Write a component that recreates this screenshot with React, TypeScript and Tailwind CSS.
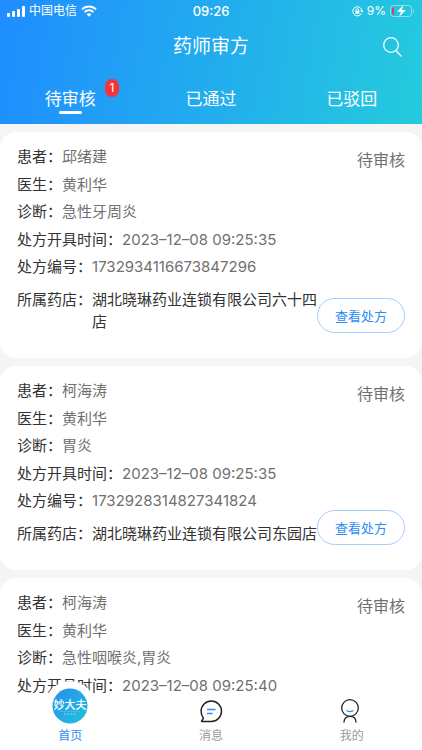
import { useState } from "react";

type Prescription = {
  patient: string;
  doctor: string;
  diagnosis: string;
  issuedAt: string;
  code: string;
  pharmacy: string;
};

const prescriptions: Prescription[] = [
  {
    patient: "邱绪建",
    doctor: "黄利华",
    diagnosis: "急性牙周炎",
    issuedAt: "2023–12–08 09:25:35",
    code: "1732934116673847296",
    pharmacy: "湖北晓琳药业连锁有限公司六十四店",
  },
  {
    patient: "柯海涛",
    doctor: "黄利华",
    diagnosis: "胃炎",
    issuedAt: "2023–12–08 09:25:35",
    code: "1732928314827341824",
    pharmacy: "湖北晓琳药业连锁有限公司东园店",
  },
  {
    patient: "柯海涛",
    doctor: "黄利华",
    diagnosis: "急性咽喉炎,胃炎",
    issuedAt: "2023–12–08 09:25:40",
    code: "1732928314827341825",
    pharmacy: "湖北晓琳药业连锁有限公司东园店",
  },
];

const tabs = [
  { label: "待审核", count: 1 },
  { label: "已通过", count: 0 },
  { label: "已驳回", count: 0 },
];

function StatusBar() {
  return (
    <div className="grid h-[22px] grid-cols-3 items-center px-[7px] text-[12px] leading-[22px]">
      <div className="flex items-center gap-1">
        <svg width="18" height="11" viewBox="0 0 18 11" fill="currentColor" aria-hidden="true">
          <rect x="0" y="7" width="3" height="4" rx="1" />
          <rect x="5" y="5" width="3" height="6" rx="1" />
          <rect x="10" y="3" width="3" height="8" rx="1" />
          <rect x="15" y="0" width="3" height="11" rx="1" />
        </svg>
        <span>中国电信</span>
        <svg width="16" height="12" viewBox="0 0 16 12" fill="none" stroke="currentColor" strokeWidth="2" aria-hidden="true">
          <path d="M1 4.4C5 .4 11 .4 15 4.4" />
          <path d="M3.6 7.1c2.6-2.5 6.2-2.5 8.8 0" />
          <path d="M5.6 9.3c1.5-1.3 3.3-1.3 4.8 0L8 11.8z" fill="currentColor" stroke="none" />
        </svg>
      </div>
      <div className="text-center text-[13px] font-medium">09:26</div>
      <div className="flex items-center justify-end gap-1">
        <svg width="11" height="11" viewBox="0 0 11 11" fill="none" stroke="currentColor" aria-hidden="true">
          <path d="M9.4 7.6A4.6 4.6 0 1 1 10 5.2" />
          <path d="M8.4 4.5 10 6.2l1-1.9" />
          <rect x="3.4" y="4.8" width="4" height="3" fill="currentColor" stroke="none" />
          <path d="M4.2 5V3.9a1.2 1.2 0 0 1 2.4 0V5" />
        </svg>
        <span>9%</span>
        <svg width="25" height="12" viewBox="0 0 25 12" fill="none" aria-hidden="true">
          <rect x=".5" y=".5" width="21" height="11" rx="3" stroke="#fff" strokeOpacity=".45" />
          <path d="M23 4v4c1.4-.5 1.4-3.5 0-4z" fill="#fff" fillOpacity=".5" />
          <rect x="2" y="2.5" width="2" height="7" rx="1" fill="#e0413f" />
          <path d="M13.5 0 7 6.8h4L9 12l6.8-7h-4z" fill="#fff" />
        </svg>
      </div>
    </div>
  );
}

function Field({ label, value }: { label: string; value: string }) {
  return (
    <div className="flex">
      <dt className="text-[#333]">{label}：</dt>
      <dd className="text-[#707070]">{value}</dd>
    </div>
  );
}

function PrescriptionCard({ item }: { item: Prescription }) {
  return (
    <article className="relative shrink-0 rounded-[16px] bg-white px-[17px] pt-[14px] pb-[25px] text-[15px] leading-[22px]">
      <div className="flex items-start justify-between">
        <dl className="flex h-[132px] flex-col justify-between">
          <Field label="患者" value={item.patient} />
          <Field label="医生" value={item.doctor} />
          <Field label="诊断" value={item.diagnosis} />
          <Field label="处方开具时间" value={item.issuedAt} />
          <Field label="处方编号" value={item.code} />
        </dl>
        <span className="pt-[3px] text-[16px] text-[#707070]">待审核</span>
      </div>
      <dl className="mt-[11px] mr-[80px] flex text-[#333]">
        <dt className="shrink-0">所属药店：</dt>
        <dd>{item.pharmacy}</dd>
      </dl>
      <button
        type="button"
        className="absolute right-[17px] bottom-[25px] h-[35px] w-[88px] rounded-full border border-[#a9ccff] text-[13px] text-[#2e8bf5]"
      >
        查看处方
      </button>
    </article>
  );
}

export default function App() {
  const [active, setActive] = useState(0);

  return (
    <div className="flex h-screen flex-col overflow-hidden bg-[#f5f5f5] font-['Inter','Noto_Sans_CJK_SC',sans-serif]">
      <header className="shrink-0 bg-linear-[100deg,#1f8dff,#25cbdd] text-white">
        <StatusBar />
        <div className="grid h-[50px] grid-cols-[1fr_auto_1fr] items-center px-[20px]">
          <h1 className="col-start-2 text-[19px] leading-[28px]">药师审方</h1>
          <button type="button" aria-label="搜索" className="justify-self-end">
            <svg width="20" height="20" viewBox="0 0 20 20" fill="none" stroke="currentColor" strokeWidth="1.3" strokeLinecap="round">
              <circle cx="9" cy="8" r="7.3" />
              <path d="m14 13.5 5 5.5" />
            </svg>
          </button>
        </div>
        <div role="tablist" className="grid h-[52px] grid-cols-3 pt-[15px]">
          {tabs.map((tab, i) => (
            <button
              key={tab.label}
              type="button"
              role="tab"
              aria-selected={active === i}
              onClick={() => setActive(i)}
              className="flex flex-col items-center text-[17px] leading-[24px]"
            >
              <span className="relative">
                {tab.label}
                {tab.count > 0 && (
                  <span className="absolute -top-[8px] left-[60px] flex h-[18px] w-[14px] items-center justify-center rounded-full bg-[#f5333a] text-[12px] leading-[18px]">
                    {tab.count}
                  </span>
                )}
              </span>
              {active === i && <span className="h-[3px] w-[23px] rounded-full bg-white" />}
            </button>
          ))}
        </div>
      </header>

      <main className="flex min-h-0 flex-1 flex-col gap-2 overflow-y-auto pt-2 [scrollbar-width:none]">
        {prescriptions.map((item, i) => (
          <PrescriptionCard key={i} item={item} />
        ))}
      </main>

      <nav className="relative grid h-[56px] shrink-0 grid-cols-3 grid-rows-1 bg-white text-[12px] leading-[18px] text-[#999]">
        <a href="#home" className="flex flex-col items-center justify-end pb-[5px] text-[#2e8bf5]">
          <span className="-mb-[4px] rounded-full bg-white p-[7px]">
            <svg className="block" width="36" height="36" viewBox="0 0 36 36" aria-hidden="true">
              <defs>
                <linearGradient id="brand" x1="0" y1="0" x2="1" y2="1">
                  <stop offset="0" stopColor="#258fef" />
                  <stop offset="1" stopColor="#22c3dc" />
                </linearGradient>
              </defs>
              <circle cx="18" cy="18" r="17.5" fill="url(#brand)" />
              <text x="18" y="21" textAnchor="middle" fontSize="11" fontWeight="500" fill="#fff">
                妙大夫
              </text>
              <path d="M8 23.5h20" stroke="#fff" strokeOpacity=".3" strokeWidth=".5" />
              <path d="M12 26h12" stroke="#fff" strokeOpacity=".5" strokeDasharray="2 1.3" />
            </svg>
          </span>
          <span>首页</span>
        </a>
        <a href="#messages" className="flex flex-col items-center justify-end gap-[4px] pb-[5px]">
          <svg width="24" height="24" viewBox="0 0 24 24" fill="none" strokeLinecap="round" aria-hidden="true">
            <path d="M2.5 22.4h9.8A10.2 10.2 0 1 0 2.1 12.2c0 2.7.8 5 2.3 6.9z" stroke="#222" strokeWidth="1.5" strokeLinejoin="round" />
            <path d="M8.5 10.5h7.5M8.5 14.5h4.5" stroke="#2e8bf5" strokeWidth="1.5" />
          </svg>
          <span>消息</span>
        </a>
        <a href="#mine" className="flex flex-col items-center justify-end gap-[4px] pb-[5px]">
          <svg width="24" height="24" viewBox="0 0 24 24" fill="none" strokeLinecap="round" aria-hidden="true">
            <circle cx="10" cy="9" r="8.3" stroke="#222" strokeWidth="1.3" />
            <path d="M4 23c.2-3.4 2.6-5.7 6-5.7s5.8 2.3 6 5.7" stroke="#222" strokeWidth="1.3" />
            <path d="M7 11.7c1.8 1 4.2 1 6 0" stroke="#2e8bf5" strokeWidth="1.3" />
          </svg>
          <span>我的</span>
        </a>
      </nav>
    </div>
  );
}
